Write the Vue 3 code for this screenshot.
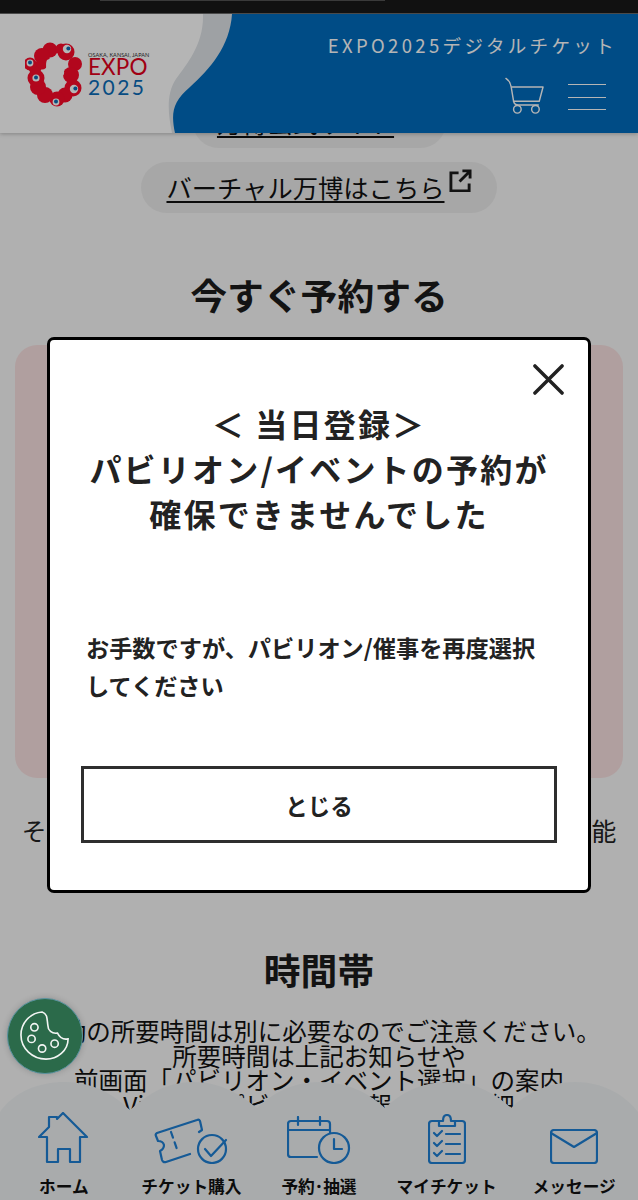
<script setup>
const navItems = [
  { key: 'home', label: 'ホーム' },
  { key: 'ticket', label: 'チケット購入' },
  { key: 'calendar', label: '予約･抽選' },
  { key: 'clip', label: 'マイチケット' },
  { key: 'mail', label: 'メッセージ' }
]
const lumps = [
  [49, 48, 7.500], [41, 54, 8], [65, 50, 8.500], [74, 62, 7], [70, 73, 8], [72, 86, 8.500],
  [64, 93, 7.500], [56, 97, 7.500], [44, 93, 8], [37, 85, 8], [35, 76, 8.500], [34, 66, 6.500], [29, 62, 6.500], [41, 62, 5.500], [60, 47, 5.500]
]
const eyes = [[66, 47, 0.9, 4.200], [73, 87, 0.9, 4.200], [55, 100, 0, 3.400], [35, 76, 0, 3.600], [29, 61, 0, 3.400]]
</script>

<template>
  <div class="app">
    <div class="status"><span class="notch"></span></div>

    <main class="page">
      <a class="pill pill-first">
        <span class="link">万博公式サイト</span>
        <svg class="ext" viewBox="0 0 24 24" fill="none" stroke="#1c1c1c" stroke-width="3">
          <path d="M10 4H2v19h19v-8" />
          <path d="M11 13L22 2M14 2h8v8" />
        </svg>
      </a>
      <a class="pill pill-second">
        <span class="link">バーチャル万博はこちら</span>
        <svg class="ext" viewBox="0 0 24 24" fill="none" stroke="#1c1c1c" stroke-width="3">
          <path d="M10 4H2v19h19v-8" />
          <path d="M11 13L22 2M14 2h8v8" />
        </svg>
      </a>
      <h2 class="heading first-heading">今すぐ予約する</h2>
      <div class="card"></div>
      <p class="note">その他の日時も空き状況により選択・変更などが可能</p>
      <h2 class="heading time-heading">時間帯</h2>
      <p class="para">移動の所要時間は別に必要なのでご注意ください。<br />所要時間は上記お知らせや<br />前画面「パビリオン・イベント選択」の案内<br />Visitの各パビリオン情報の中の詳細</p>
    </main>

    <header class="header">
      <svg class="wave" viewBox="0 0 638 119" preserveAspectRatio="none">
        <path fill="#dfe3e7" d="M203 0C204 30 187 50 176 65C166 80 168 100 172 119H638V0Z" />
        <path fill="#006bbd" d="M232 0C230 32 210 55 190 73C172 88 171 100 175 119H638V0Z" />
      </svg>
      <div class="logo">
        <svg class="mark" viewBox="24 38 60 72">
          <circle v-for="(l, i) in lumps" :key="i" :cx="l[0]" :cy="l[1]" :r="l[2]" fill="#fb0a2a" />
          <path fill="#fff" d="M46 58C50 56 57 56 59 58C60 64 64 67 63 72C60 77 57 83 50 85C46 83 44 78 45 72C46 67 44 62 46 58Z" />
          <g v-for="(e, i) in eyes" :key="'e' + i">
            <circle :cx="e[0]" :cy="e[1]" :r="e[3]" fill="#fff" />
            <circle :cx="e[0] + e[2] * 1.500" :cy="e[1] - 0.600" r="2" fill="#0d6cb5" />
          </g>
        </svg>
        <div class="wordmark">
          <span class="place">OSAKA, KANSAI, JAPAN</span>
          <span class="expo">EXPO</span>
          <span class="year">2025</span>
        </div>
      </div>
      <div class="head-right">
        <div class="site-title">EXPO2025デジタルチケット</div>
        <div class="head-icons">
          <svg class="cart" viewBox="0 0 41 39" fill="none" stroke="#fff" stroke-width="1.500" stroke-linecap="round" stroke-linejoin="round">
            <path d="M1 1C4 3 6 6 6.500 10L9 25Q10 29 14 29H35" />
            <path d="M7 10H40L36 25H9" />
            <circle cx="13" cy="33.500" r="4" />
            <circle cx="32" cy="33.500" r="4" />
          </svg>
          <div class="burger"><span></span><span></span><span></span></div>
        </div>
      </div>
    </header>

    <nav class="nav">
      <svg class="nav-shape" viewBox="0 0 638 118" preserveAspectRatio="none">
        <path fill="#eef1f3" d="M0 30C14 10 38 0 65 0C95 0 115 14 130 28C146 14 165 0 193 0C222 0 242 14 257 26C272 12 292 0 320 0C348 0 370 12 385 26C400 12 420 0 448 0C476 0 496 12 511 26C526 12 548 0 575 0C602 0 624 12 638 30V118H0Z" />
      </svg>
      <div v-for="item in navItems" :key="item.key" class="nav-item">
        <div class="nav-icon">
          <svg v-if="item.key === 'home'" width="51" height="52" viewBox="0 0 51 52" class="ic">
            <path d="M1 25L11 15V5H19V7L25 1L49 25H42V50H32V37H20V50H9V25Z" />
          </svg>
          <svg v-else-if="item.key === 'ticket'" width="76" height="46" viewBox="0 0 76 46" class="ic">
            <path d="M46 14L49 12L47 3Q46 1 44 2L4 15Q2 16 3 18L5 23Q10 23 11 27Q11 31 7 33L9 42Q10 45 13 44L37 36" />
            <path d="M18 14L25 34" stroke-dasharray="6 5" />
            <circle cx="59" cy="31" r="14" />
            <path d="M52 31L58 38L73 22" />
          </svg>
          <svg v-else-if="item.key === 'calendar'" width="64" height="48" viewBox="0 0 64 48" class="ic">
            <path d="M30 41H4Q1 41 1 38V8Q1 5 4 5H40Q43 5 43 8V17" />
            <path d="M1 14H43M11 1V9M33 1V9" />
            <circle cx="47" cy="32" r="15" />
            <path d="M47 23V33H55" />
          </svg>
          <svg v-else-if="item.key === 'clip'" width="38" height="50" viewBox="0 0 38 50" class="ic">
            <path d="M11 7H4Q1 7 1 10V46Q1 49 4 49H34Q37 49 37 46V10Q37 7 34 7H27" />
            <path d="M11 12V7H15Q15 1 19 1Q23 1 23 7H27V12Z" />
            <path d="M6 19L9 22L14 17M6 29L9 32L14 27M6 39L9 42L14 37M18 20H32M18 30H32M18 40H32" />
          </svg>
          <svg v-else width="48" height="35" viewBox="0 0 48 35" class="ic">
            <rect x="1" y="1" width="46" height="33" rx="3" />
            <path d="M1 4L24 18L47 4" />
          </svg>
        </div>
        <span class="nav-label">{{ item.label }}</span>
      </div>
    </nav>

    <div class="scrim">
      <section class="modal">
        <button class="close" aria-label="close">
          <svg viewBox="0 0 32 32" fill="none" stroke="#222" stroke-width="3.600" stroke-linecap="round">
            <path d="M2 2L30 30M30 2L2 30" />
          </svg>
        </button>
        <h3 class="title">＜ 当日登録＞<br />パビリオン/イベントの予約が<br />確保できませんでした</h3>
        <p class="body">お手数ですが、パビリオン/催事を再度選択してください</p>
        <button class="close-btn">とじる</button>
      </section>
    </div>

    <button class="cookie" aria-label="cookie settings">
      <svg viewBox="0 0 52 52" fill="none" stroke="#f2f5f3" stroke-width="1.700">
        <path d="M23 1C10 2 1 13 1 25C1 39 13 50 27 50C39 50 50 41 50 29C45 30 41 27 39 23C33 24 29 20 29 15C28 9 29 3 23 1Z" />
        <circle cx="15" cy="17" r="3.800" />
        <circle cx="12" cy="29" r="3.800" />
        <circle cx="23" cy="39" r="3.800" />
        <circle cx="36" cy="34" r="3.800" />
      </svg>
    </button>
  </div>
</template>

<style>
html, body { margin: 0; background: #b0b0b0; }
</style>

<style scoped>
.app {
  position: relative;
  width: 638px;
  height: 1200px;
  overflow: hidden;
  background: #f8f8f8;
  color: #111;
  font-family: "Noto Sans CJK JP", "Noto Sans", sans-serif;
}
.status {
  position: relative;
  z-index: 5;
  height: 13px;
  background: #111;
  border-bottom: 1px solid #4a4a4a;
}
.notch {
  display: block;
  width: 285px;
  height: 1px;
  margin-left: 100px;
  background: #3a3a3a;
}
.page {
  display: flex;
  flex-direction: column;
  align-items: center;
  padding-top: 83px;
}
.pill {
  display: flex;
  align-items: center;
  justify-content: center;
  height: 51px;
  gap: 4px;
  border-radius: 26px;
  background: #ececec;
  font-size: 25.300px;
  line-height: 32px;
}
.pill-first { width: 253px; }
.pill-second {
  width: 356px;
  margin-top: 14px;
  box-sizing: border-box;
}
.link {
  margin-top: -2px;
  text-decoration: underline;
  text-decoration-thickness: 2px;
  text-underline-offset: 3px;
  white-space: nowrap;
}
.ext { width: 23px; height: 23px; margin-top: -15px; flex: none; }
.heading {
  margin: 0;
  font-size: 36.800px;
  line-height: 50px;
  font-weight: 700;
  color: #1c1c1c;
}
.first-heading { margin-top: 56px; }
.card {
  width: 608px;
  height: 433px;
  margin-top: 26px;
  border-radius: 22px;
  background: #f8e1e1;
}
.note {
  margin: 34px 0 0;
  font-size: 24.800px;
  line-height: 36px;
  white-space: nowrap;
  color: #222;
}
.time-heading { margin-top: 96px; }
.para {
  margin: 25px 0 0;
  font-size: 24.500px;
  line-height: 24.600px;
  text-align: center;
  white-space: nowrap;
  color: #111;
}
.header {
  position: absolute;
  top: 14px;
  left: 0;
  z-index: 2;
  width: 638px;
  height: 119px;
  box-sizing: border-box;
  display: flex;
  justify-content: space-between;
  padding: 0 24px 0 25px;
  background: #fff;
  box-shadow: 0 1px 4px rgba(0, 0, 0, 0.25);
}
.wave {
  position: absolute;
  inset: 0;
  width: 100%;
  height: 100%;
}
.logo {
  position: relative;
  display: flex;
  align-items: flex-start;
  gap: 3px;
  padding-top: 26px;
}
.mark { width: 60px; height: 72px; flex: none; }
.wordmark {
  display: flex;
  flex-direction: column;
  width: 60px;
  padding-top: 12px;
  font-family: Lato, "Noto Sans", sans-serif;
}
.place {
  font-size: 5.500px;
  line-height: 6px;
  letter-spacing: 0.050px;
  white-space: nowrap;
  color: #333;
}
.expo {
  font-size: 22.500px;
  line-height: 21px;
  letter-spacing: 0.100px;
  margin-top: -2px;
  color: #e3001b;
}
.year {
  font-size: 21px;
  line-height: 20px;
  letter-spacing: 2.400px;
  color: #0a6cb8;
}
.head-right {
  position: relative;
  display: flex;
  flex-direction: column;
  align-items: flex-end;
}
.site-title {
  margin-top: 17px;
  font-size: 18.500px;
  line-height: 28px;
  letter-spacing: 3.350px;
  white-space: nowrap;
  color: #fff;
  margin-right: -3px;
}
.head-icons {
  display: flex;
  align-items: flex-start;
  gap: 24px;
  margin-top: 18px;
  margin-right: 8px;
}
.cart { width: 39px; height: 38px; }
.burger {
  display: flex;
  flex-direction: column;
  gap: 11.500px;
  padding-top: 7px;
}
.burger span {
  display: block;
  width: 38px;
  height: 1px;
  background: #fff;
}
.nav {
  position: absolute;
  left: 0;
  bottom: 0;
  z-index: 2;
  width: 638px;
  height: 118px;
  display: flex;
}
.nav-shape {
  position: absolute;
  inset: 0;
  width: 100%;
  height: 100%;
}
.nav-item {
  position: relative;
  flex: 1;
  display: flex;
  flex-direction: column;
  align-items: center;
}
.nav-icon {
  height: 82px;
  display: flex;
  align-items: flex-end;
  justify-content: center;
}
.ic {
  fill: none;
  stroke: #1e7fd3;
  stroke-width: 2.200;
  stroke-linejoin: round;
  stroke-linecap: round;
}
.nav-label {
  margin-top: 10px;
  font-size: 16.700px;
  line-height: 24px;
  font-weight: 700;
  white-space: nowrap;
  color: #111;
}
.scrim {
  position: absolute;
  inset: 0;
  z-index: 3;
  display: flex;
  justify-content: center;
  align-items: flex-start;
  padding-top: 337px;
  box-sizing: border-box;
  background: rgba(0, 0, 0, 0.29);
}
.modal {
  position: relative;
  width: 544px;
  height: 556px;
  box-sizing: border-box;
  display: flex;
  flex-direction: column;
  padding: 61px 30px 0;
  border: 3px solid #000;
  border-radius: 7px;
  background: #fff;
  color: #222;
}
.close {
  position: absolute;
  top: 24px;
  right: 24px;
  width: 31px;
  height: 31px;
  padding: 0;
  border: 0;
  background: none;
}
.close svg { display: block; width: 100%; height: 100%; }
.title {
  margin: 0;
  font-size: 32px;
  line-height: 45px;
  font-weight: 700;
  letter-spacing: 2.200px;
  text-align: center;
  white-space: nowrap;
}
.body {
  margin: 92px 0 0;
  padding: 0 0 0 6px;
  font-size: 23.200px;
  line-height: 38px;
  font-weight: 700;
}
.close-btn {
  display: block;
  width: 476px;
  height: 77px;
  margin: 62px 0 0 1px;
  border: 3.500px solid #2f2f2f;
  background: #fff;
  color: #222;
  font-family: inherit;
  font-size: 22.500px;
  font-weight: 700;
}
.cookie {
  position: absolute;
  left: 7px;
  top: 998px;
  z-index: 4;
  width: 76px;
  height: 76px;
  padding: 12px;
  box-sizing: border-box;
  border: 1px solid #5a93a0;
  border-radius: 50%;
  background: #2b6a4a;
  box-shadow: 0 0 6px rgba(0, 0, 0, 0.2);
}
.cookie svg { display: block; width: 100%; height: 100%; }
</style>
